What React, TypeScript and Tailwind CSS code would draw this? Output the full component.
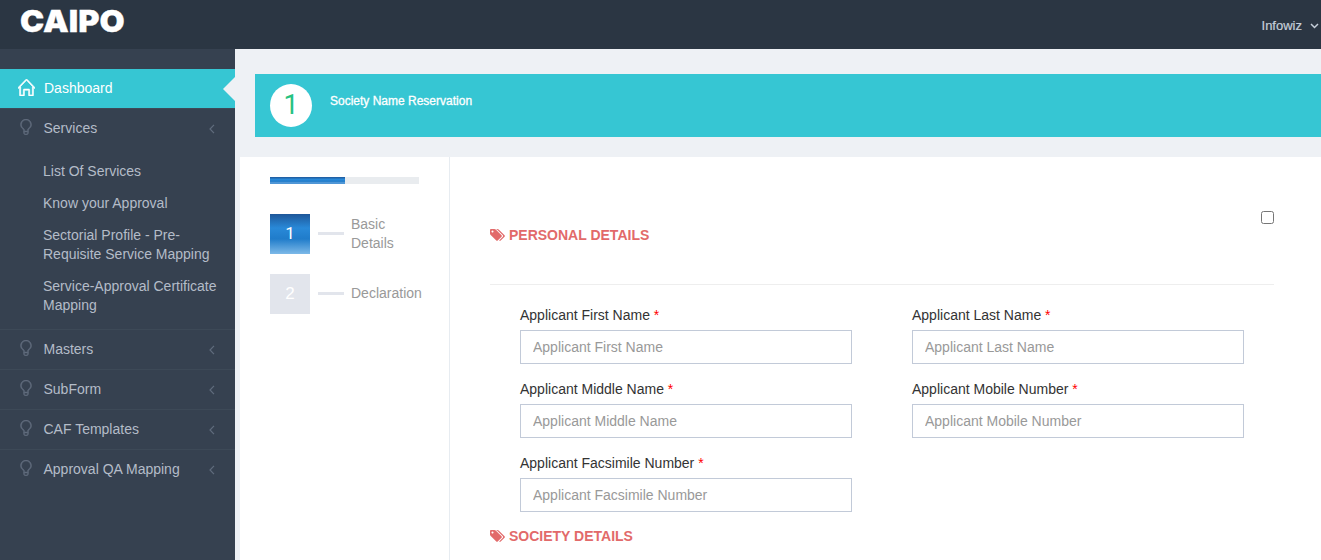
import React from "react";
import { SlHome, SlBulb } from "react-icons/sl";

const ARROW = "M5 .8 L1 5 L5 9.2";

function AngleLeft() {
  return (
    <svg className="mt-[2px] ml-auto h-[10px] w-[6px]" viewBox="0 0 6 10" fill="none" stroke="#606c7d" strokeWidth="1.2">
      <path d={ARROW} />
    </svg>
  );
}

function MenuItem({ label }: { label: string }) {
  return (
    <a className="flex h-10 items-center border-t border-[#3d4957] pr-5 pb-[2px] pl-[18px] text-[#b4bcc8]">
      <SlBulb className="mr-[9.5px] mb-[1px] h-4 w-4 stroke-[#606c7d] [stroke-width:30] text-[#606c7d]" />
      <span className="leading-5">{label}</span>
      <AngleLeft />
    </a>
  );
}

const subItems = [
  "List Of Services",
  "Know your Approval",
  "Sectorial Profile - Pre-Requisite Service Mapping",
  "Service-Approval Certificate Mapping",
];

function Sidebar() {
  return (
    <nav className="w-[235px] shrink-0 bg-[#364150] pt-5 text-sm">
      <a className="flex h-[39px] items-center bg-[#36c6d3] pl-[18px] text-white">
        <SlHome className="mr-[9px] mb-[3px] h-[17px] w-[17px] stroke-white [stroke-width:40]" />
        <span className="pb-[2px] leading-5">Dashboard</span>
        <svg className="mt-[1px] ml-auto h-6 w-3" viewBox="0 0 12 24">
          <path d="M12 0V24L0 12Z" fill="#eef1f5" />
        </svg>
      </a>
      <MenuItem label="Services" />
      <ul className="pt-2 pb-[7px]">
        {subItems.map((s) => (
          <li key={s} className="pt-[6px] pr-4 pb-[7px] pl-[43px] leading-[19px] text-[#b4bcc8]">
            {s}
          </li>
        ))}
      </ul>
      <MenuItem label="Masters" />
      <MenuItem label="SubForm" />
      <MenuItem label="CAF Templates" />
      <MenuItem label="Approval QA Mapping" />
    </nav>
  );
}

function Tags() {
  return (
    <svg className="h-[14px] w-[15px]" viewBox="0 0 1920 1792" fill="currentColor">
      <path d="M448 448q0-53-37.5-90.5t-90.5-37.5-90.5 37.5-37.5 90.5 37.5 90.5 90.5 37.5 90.5-37.5 37.5-90.5zm1067 576q0 53-37 90l-491 492q-39 37-91 37-53 0-90-37l-715-716q-38-37-64.5-101t-26.5-117v-416q0-52 38-90t90-38h416q53 0 117 26.5t102 64.5l715 714q37 39 37 91zm384 0q0 53-37 90l-491 492q-39 37-91 37-36 0-59-14t-53-45l470-470q37-37 37-90 0-52-37-91l-715-714q-38-38-102-64.5t-117-26.5h224q53 0 117 26.5t102 64.5l715 714q37 39 37 91z" />
    </svg>
  );
}

function SectionTitle({ children }: { children: string }) {
  return (
    <h3 className="flex h-5 items-center gap-1 text-sm font-bold text-[#e26a6a]">
      <Tags />
      <span>{children}</span>
    </h3>
  );
}

function Field({ label }: { label: string }) {
  return (
    <label className="block h-[74px] w-[332px] text-sm text-[#333]">
      <span className="block h-[25px] leading-5">
        {label} <span className="text-[#ff0000]">*</span>
      </span>
      <input
        placeholder={label}
        className="block h-[34px] w-full border border-[#c2cad8] bg-white px-3 placeholder:text-[#999] placeholder:opacity-100"
      />
    </label>
  );
}

function Step({ n, label, active }: { n: number; label: string; active?: boolean }) {
  return (
    <li className="flex h-10 items-center">
      <span
        className={
          active
            ? "flex h-10 w-10 items-center justify-center bg-[linear-gradient(to_bottom,#1e5799_0%,#2989d8_35%,#207cca_62%,#7db9e8_100%)] pb-px font-['Roboto',sans-serif] text-[17px] text-white"
            : "flex h-10 w-10 items-center justify-center bg-[#e2e5ec] pb-px text-[17px] text-white"
        }
      >
        {n}
      </span>
      <span className="mr-[7px] mb-px ml-2 h-[3px] w-[26px] bg-[#e2e5ec]" />
      <span className={active ? "w-[72px] text-sm leading-[19px] text-[#999]" : "w-[72px] pb-[2px] text-sm leading-[19px] text-[#999]"}>
        {label}
      </span>
    </li>
  );
}

export default function App() {
  return (
    <div className="flex h-[560px] w-[1321px] flex-col overflow-hidden bg-[#eef1f5] font-['Liberation_Sans',Arial,sans-serif]">
      <header className="flex h-[49px] shrink-0 justify-between bg-[#2b3643]">
        <span className="ml-5 origin-left scale-x-[1.08] font-['Inter',sans-serif] text-[30px] leading-[42px] font-black text-white [-webkit-text-stroke:0.3px_white]">
          CAIPO
        </span>
        <span className="flex h-[51px] items-center gap-2 pr-0.5 text-[13px] text-[#c6cfda] [-webkit-text-stroke:0.2px_#c6cfda]">
          Infowiz
          <svg className="h-[6px] w-[9px]" viewBox="0 0 9 6" fill="none" stroke="currentColor" strokeWidth="1.5">
            <path d="M1 1 L4.5 4.5 L8 1" />
          </svg>
        </span>
      </header>
      <div className="flex min-h-0 flex-1">
        <Sidebar />
        <main className="flex min-w-0 flex-1 flex-col">
          <div className="mt-[25px] ml-5 flex h-[63px] shrink-0 bg-[#36c6d3] pt-[10px] pl-[15px]">
            <span className="flex h-[43px] w-[42px] items-center justify-center rounded-[50%] bg-white pb-px font-['Roboto',sans-serif] text-[27px] text-[#26c281]">
              1
            </span>
            <span className="ml-[18px] pt-2 text-xs leading-[18px] text-white [-webkit-text-stroke:0.3px_white]">
              Society Name Reservation
            </span>
          </div>
          <section className="mt-5 ml-[5px] flex min-h-0 flex-1 bg-white">
            <aside className="w-[210px] shrink-0 border-r border-[#e7ecf1] pt-5 pl-[30px]">
              <div className="h-[7px] w-[149px] bg-[#e9ecef]">
                <div className="h-full w-[75px] bg-[linear-gradient(to_bottom,#1e5799_0%,#2989d8_35%,#207cca_62%,#4f96d6_75%)]" />
              </div>
              <ol className="mt-[30px] flex flex-col gap-5">
                <Step n={1} label="Basic Details" active />
                <Step n={2} label="Declaration" />
              </ol>
            </aside>
            <div className="w-[824px] shrink-0 pt-[54px] pl-10">
              <div className="flex h-[74px] justify-between border-b border-[#eee]">
                <div className="pt-[14px]">
                  <SectionTitle>PERSONAL DETAILS</SectionTitle>
                </div>
                <input type="checkbox" className="h-[13px] w-[13px]" />
              </div>
              <div className="-mb-px grid grid-cols-[332px_332px] gap-x-[60px] pt-5 pl-[30px]">
                <Field label="Applicant First Name" />
                <Field label="Applicant Last Name" />
                <Field label="Applicant Middle Name" />
                <Field label="Applicant Mobile Number" />
                <Field label="Applicant Facsimile Number" />
              </div>
              <SectionTitle>SOCIETY DETAILS</SectionTitle>
            </div>
          </section>
        </main>
      </div>
    </div>
  );
}
